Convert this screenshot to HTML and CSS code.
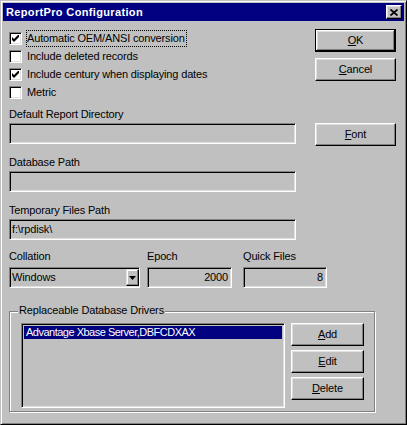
FILE: index.html
```html
<!DOCTYPE html>
<html>
<head>
<meta charset="utf-8">
<link rel="stylesheet" href="styles.css">
</head>
<body>
<div class="window">
  <div class="titlebar">
    <span class="title">ReportPro Configuration</span>
    <span class="close"><svg width="8" height="7" viewBox="0 0 8 7"><path d="M0.5 0.5 L7.5 6.5 M7.5 0.5 L0.5 6.5" stroke="#000" stroke-width="1.7" fill="none"/></svg></span>
  </div>
  <div class="content">
    <div class="top">
      <div class="left">
        <div class="checks">
          <div class="check"><span class="box"><svg width="7" height="7" viewBox="0 0 7 7"><path d="M0 2 L2 4 L7 -1 L7 2 L2 7 L0 5 Z" fill="#000"/></svg></span><span class="label focus">Automatic OEM/ANSI conversion</span></div>
          <div class="check"><span class="box"></span><span class="label">Include deleted records</span></div>
          <div class="check"><span class="box"><svg width="7" height="7" viewBox="0 0 7 7"><path d="M0 2 L2 4 L7 -1 L7 2 L2 7 L0 5 Z" fill="#000"/></svg></span><span class="label">Include century when displaying dates</span></div>
          <div class="check"><span class="box"></span><span class="label">Metric</span></div>
        </div>
        <div class="block first">
          <div class="flabel">Default Report Directory</div>
          <div class="field"></div>
        </div>
        <div class="block">
          <div class="flabel">Database Path</div>
          <div class="field"></div>
        </div>
        <div class="block">
          <div class="flabel">Temporary Files Path</div>
          <div class="field">f:\rpdisk\</div>
        </div>
      </div>
      <div class="right">
        <div class="btn default"><span><u>O</u>K</span></div>
        <div class="btn cancel"><span><u>C</u>ancel</span></div>
        <div class="btn font"><span><u>F</u>ont</span></div>
      </div>
    </div>
    <div class="row3">
      <div class="col collation">
        <div class="flabel">Collation</div>
        <div class="field combo"><span class="ctext">Windows</span><span class="drop"><svg width="7" height="4" viewBox="0 0 7 4"><path d="M0 0 L7 0 L3.5 4 Z" fill="#000"/></svg></span></div>
      </div>
      <div class="col epoch">
        <div class="flabel">Epoch</div>
        <div class="field num">2000</div>
      </div>
      <div class="col quick">
        <div class="flabel">Quick Files</div>
        <div class="field num">8</div>
      </div>
    </div>
    <div class="group">
      <span class="legend">Replaceable Database Drivers</span>
      <div class="list">
        <div class="item sel">Advantage Xbase Server,DBFCDXAX</div>
      </div>
      <div class="gbtns">
        <div class="btn"><span><u>A</u>dd</span></div>
        <div class="btn"><span><u>E</u>dit</span></div>
        <div class="btn"><span><u>D</u>elete</span></div>
      </div>
    </div>
  </div>
</div>
</body>
</html>
```
FILE: styles.css
```css
html, body {
  margin: 0;
  padding: 0;
  background: #c0c0c0;
}
.window {
  box-sizing: border-box;
  width: 407px;
  height: 425px;
  background: #c0c0c0;
  border: 1px solid;
  border-color: #c0c0c0 #000 #000 #c0c0c0;
  box-shadow: inset 1px 1px 0 #fff, inset -1px -1px 0 #808080;
  padding: 2px;
  font-family: "Liberation Sans", Arial, sans-serif;
  font-size: 11px;
  letter-spacing: -0.15px;
  color: #000;
}
.titlebar {
  height: 18px;
  box-sizing: border-box;
  background: #000080;
  display: flex;
  align-items: center;
  justify-content: space-between;
  padding: 2px 2px 2px 3px;
}
.title {
  color: #fff;
  font-weight: bold;
  font-size: 11px;
  letter-spacing: 0.35px;
  line-height: 14px;
}
.close {
  box-sizing: border-box;
  width: 16px;
  height: 14px;
  background: #c0c0c0;
  border: 1px solid;
  border-color: #fff #000 #000 #fff;
  box-shadow: inset -1px -1px 0 #808080, inset 1px 1px 0 #dfdfdf;
  display: flex;
  align-items: center;
  justify-content: center;
}
.close svg { display: block; }
.content {
  padding: 8px 0 0 6px;
}
.top {
  display: flex;
  gap: 19px;
}
.left {
  width: 287px;
}
.check {
  height: 18px;
  display: flex;
  align-items: center;
}
.box {
  box-sizing: border-box;
  width: 13px;
  height: 13px;
  background: #fff;
  border: 1px solid;
  border-color: #808080 #fff #fff #808080;
  box-shadow: inset 1px 1px 0 #000, inset -1px -1px 0 #dfdfdf;
  margin-right: 4px;
  display: flex;
  align-items: center;
  justify-content: center;
  flex: none;
}
.box svg { display: block; }
.label {
  line-height: 15px;
  border: 1px solid transparent;
  padding: 0 1px 0 0;
  white-space: nowrap;
}
.label.focus {
  border: 1px dotted #000;
}
.flabel {
  height: 13px;
  line-height: 13px;
  margin-bottom: 2px;
  white-space: nowrap;
}
.block { margin-top: 12px; }
.block.first { margin-top: 7px; }
.field {
  box-sizing: border-box;
  height: 21px;
  background: #c0c0c0;
  border: 1px solid;
  border-color: #808080 #fff #fff #808080;
  box-shadow: inset 1px 1px 0 #000, inset -1px -1px 0 #dfdfdf;
  padding: 0 2px 0 2px;
  line-height: 19px;
  white-space: nowrap;
  overflow: hidden;
}
.right {
  width: 81px;
  display: flex;
  flex-direction: column;
}
.btn {
  box-sizing: border-box;
  height: 23px;
  background: #c0c0c0;
  border: 1px solid;
  border-color: #fff #000 #000 #fff;
  box-shadow: inset -1px -1px 0 #808080, inset 1px 1px 0 #dfdfdf;
  display: flex;
  align-items: center;
  justify-content: center;
  line-height: 13px;
}
.btn.default {
  border-color: #000;
  box-shadow: inset -1px -1px 0 #000, inset 1px 1px 0 #fff, inset -2px -2px 0 #808080, inset 2px 2px 0 #dfdfdf;
}
.btn u { text-decoration: underline; text-underline-offset: 1px; }
.btn.cancel { margin-top: 6px; }
.btn.font { margin-top: 42px; }
.row3 {
  display: flex;
  margin-top: 10px;
}
.row3 .flabel { margin-bottom: 4px; }
.collation { width: 131px; }
.epoch { width: 85px; margin-left: 7px; }
.quick { width: 84px; margin-left: 11px; }
.combo {
  display: flex;
  align-items: center;
  padding: 0 2px 0 2px;
}
.ctext { flex: 1; }
.drop {
  box-sizing: border-box;
  width: 13px;
  height: 17px;
  background: #c0c0c0;
  border: 1px solid;
  border-color: #dfdfdf #000 #000 #dfdfdf;
  box-shadow: inset -1px -1px 0 #808080, inset 1px 1px 0 #fff;
  display: flex;
  align-items: center;
  justify-content: center;
  margin-right: -2px;
}
.drop svg { display: block; }
.num {
  text-align: right;
  padding-right: 3px;
}
.group {
  position: relative;
  box-sizing: border-box;
  width: 366px;
  height: 101px;
  margin-top: 23px;
  border: 1px solid #808080;
  box-shadow: inset 1px 1px 0 #fff, 1px 1px 0 #fff;
  padding: 11px 0 0 11px;
  display: flex;
  gap: 6px;
}
.legend {
  position: absolute;
  top: -8px;
  left: 8px;
  padding: 0 1px;
  background: #c0c0c0;
  line-height: 13px;
  white-space: nowrap;
}
.list {
  box-sizing: border-box;
  width: 264px;
  height: 85px;
  background: #c0c0c0;
  border: 1px solid;
  border-color: #808080 #fff #fff #808080;
  box-shadow: inset 1px 1px 0 #000, inset -1px -1px 0 #dfdfdf;
  padding: 2px 2px;
}
.item {
  height: 13px;
  line-height: 13px;
  padding-left: 2px;
  white-space: nowrap;
  letter-spacing: -0.5px;
}
.item.sel {
  background: #000080;
  color: #fff;
}
.gbtns {
  width: 73px;
  display: flex;
  flex-direction: column;
  gap: 4px;
}
```
